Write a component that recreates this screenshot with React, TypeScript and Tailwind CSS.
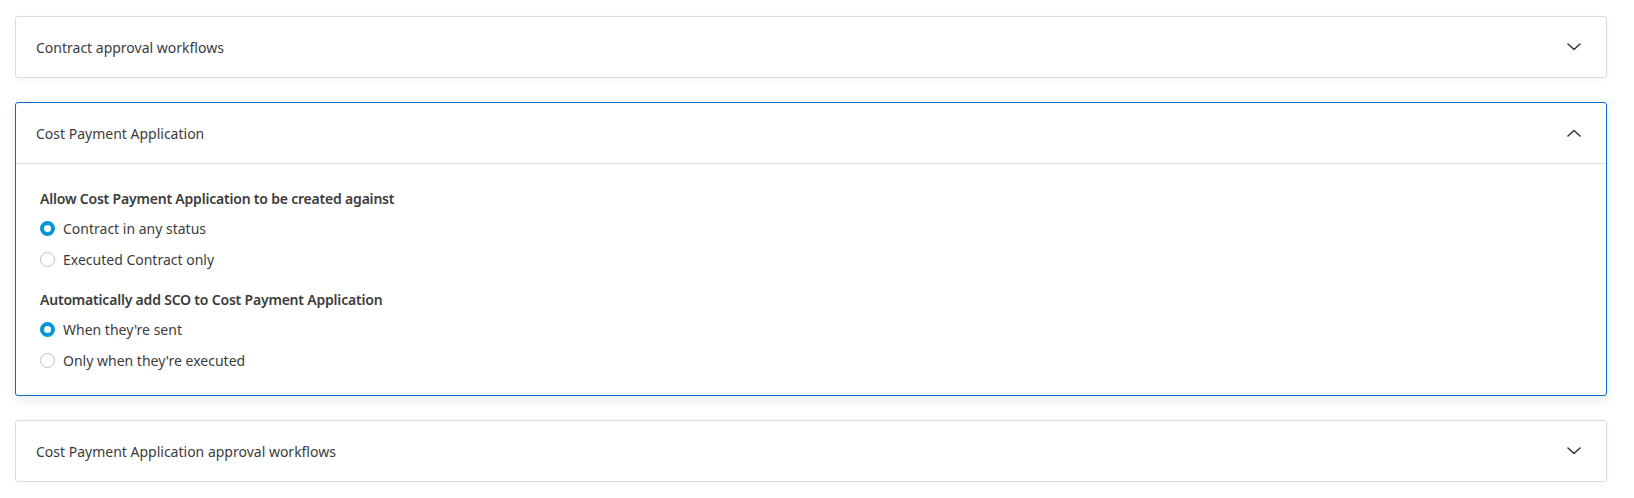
import React, { useState } from "react";

interface Option {
  value: string;
  label: string;
}

interface Group {
  id: string;
  title: string;
  options: Option[];
  selected: string;
}

const groups: Group[] = [
  {
    id: "against",
    title: "Allow Cost Payment Application to be created against",
    options: [
      { value: "any", label: "Contract in any status" },
      { value: "executed", label: "Executed Contract only" },
    ],
    selected: "any",
  },
  {
    id: "sco",
    title: "Automatically add SCO to Cost Payment Application",
    options: [
      { value: "sent", label: "When they're sent" },
      { value: "executed", label: "Only when they're executed" },
    ],
    selected: "sent",
  },
];

const Chevron: React.FC<{ up?: boolean }> = ({ up }) => (
  <svg width="14" height="8" viewBox="0 0 14 8" fill="none" className="mr-[25px]">
    <path
      d={up ? "M1 7L7 1.5L13 7" : "M1 1L7 6.5L13 1"}
      stroke="#3c3c3c"
      strokeWidth="1.6"
      strokeLinecap="round"
      strokeLinejoin="round"
    />
  </svg>
);

const Radio: React.FC<{ checked: boolean; label: string; onClick: () => void }> = ({
  checked,
  label,
  onClick,
}) => (
  <button type="button" onClick={onClick} className="flex items-center h-5 text-left">
    {checked ? (
      <span className="w-[15px] h-[15px] rounded-full border-[4px] border-[#0696d7] bg-white" />
    ) : (
      <span className="w-[15px] h-[15px] rounded-full border border-[#bfbfbf] bg-white" />
    )}
    <span className="ml-2 text-[14px] text-[#3c3c3c]">{label}</span>
  </button>
);

const Panel: React.FC<{
  title: string;
  open: boolean;
  onToggle: () => void;
  children?: React.ReactNode;
}> = ({ title, open, onToggle, children }) => (
  <div
    className={
      open
        ? "bg-white rounded-[3px] border border-[#0b6ec9] shadow-[0_4px_12px_rgba(0,0,0,0.09)]"
        : "bg-white rounded-[3px] border border-[#dcdcdc] shadow-[0_2px_6px_rgba(0,0,0,0.04)]"
    }
  >
    <button
      type="button"
      onClick={onToggle}
      className="w-full h-[60px] flex items-center justify-between pl-5 text-left"
    >
      <span className="text-[14px] text-[#3c3c3c]">{title}</span>
      <Chevron up={open} />
    </button>
    {open && <div className="border-t border-[#dcdcdc]">{children}</div>}
  </div>
);

export default function App() {
  const [openId, setOpenId] = useState<string | null>("cpa");
  const [values, setValues] = useState<Record<string, string>>(
    Object.fromEntries(groups.map((g) => [g.id, g.selected]))
  );

  const toggle = (id: string) => setOpenId(openId === id ? null : id);

  return (
    <div
      className="bg-white min-h-screen pl-[15px] pr-[27px] pt-4 pb-4 flex flex-col gap-6"
      style={{ fontFamily: "'Noto Sans', sans-serif" }}
    >
      <Panel
        title="Contract approval workflows"
        open={openId === "caw"}
        onToggle={() => toggle("caw")}
      />
      <Panel
        title="Cost Payment Application"
        open={openId === "cpa"}
        onToggle={() => toggle("cpa")}
      >
        <div className="pl-6 pr-6 pt-6 pb-[25px] flex flex-col">
          {groups.map((g, i) => (
            <div key={g.id} className={i > 0 ? "mt-5" : ""}>
              <div className="h-5 flex items-center text-[14px] font-semibold tracking-[-0.2px] text-[#3c3c3c]">
                {g.title}
              </div>
              <div className="mt-[10px] flex flex-col gap-[11px]">
                {g.options.map((o) => (
                  <Radio
                    key={o.value}
                    label={o.label}
                    checked={values[g.id] === o.value}
                    onClick={() => setValues({ ...values, [g.id]: o.value })}
                  />
                ))}
              </div>
            </div>
          ))}
        </div>
      </Panel>
      <Panel
        title="Cost Payment Application approval workflows"
        open={openId === "cpaaw"}
        onToggle={() => toggle("cpaaw")}
      />
    </div>
  );
}
